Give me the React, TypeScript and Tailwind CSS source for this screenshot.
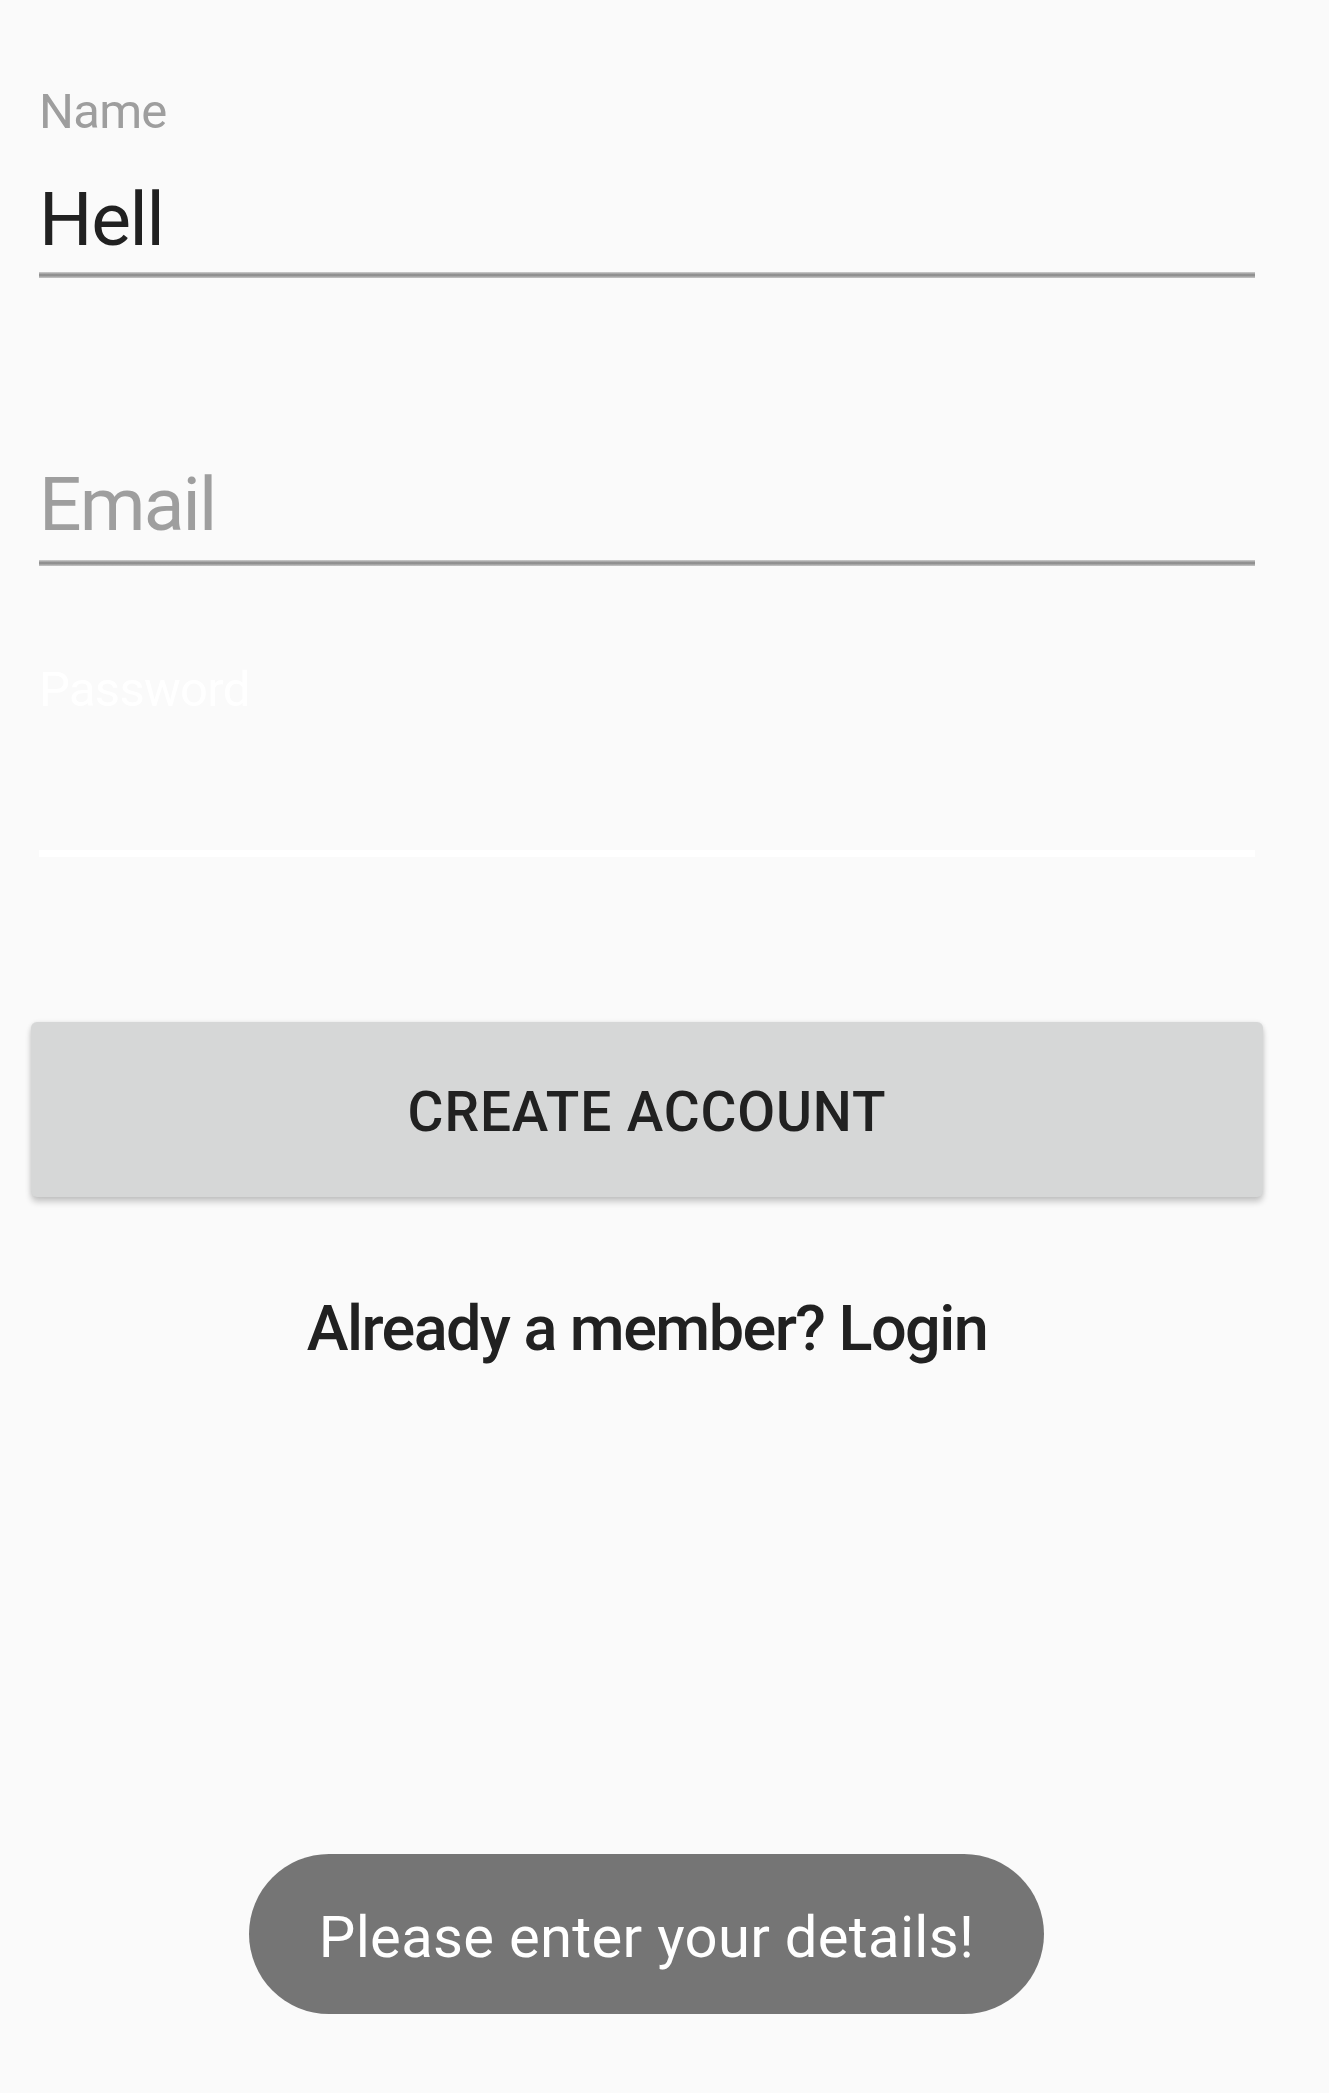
export default function App() {
  return (
    <div className="relative min-h-[2093px] bg-[#fafafa] font-['Roboto',sans-serif]">
      <div className="flex flex-col pl-[39px] pr-[74px] pt-[87px]">
        {/* name */}
        <label className="text-[49px] leading-none tracking-[-0.015em] text-[#9e9e9e]">Name</label>
        <div className="mt-[46px] text-[75px] leading-none tracking-[-0.018em] text-[#212121]">Hell</div>
        <div className="mt-[15px] h-[6px] bg-linear-to-b from-[#cfcfcf] via-[#858585] to-[#c8c8c8]" />

        {/* email */}
        <div className="mt-[189px] text-[75px] leading-none tracking-[-0.025em] text-[#9e9e9e]">Email</div>
        <div className="mt-[18px] h-[6px] bg-linear-to-b from-[#cfcfcf] via-[#858585] to-[#c8c8c8]" />

        {/* password, white on near-white */}
        <label className="mt-[99px] text-[49px] leading-none tracking-[-0.015em] text-white">Password</label>
        <div className="mt-[136px] h-[7px] bg-white" />

        <button className="mt-[165px] -mx-[8px] flex h-[175px] items-center justify-center rounded-[6px] bg-[#d6d7d7] pt-[5px] text-[55px] font-medium leading-none tracking-[0.016em] text-[#212121] shadow-[0_5px_6px_rgba(0,0,0,0.2),0_0_4px_rgba(0,0,0,0.08)]">
          CREATE ACCOUNT
        </button>

        <p className="mt-[100px] text-center text-[63px] font-medium leading-none tracking-[-0.025em] text-[#212121]">
          Already a member? Login
        </p>
      </div>

      <div className="absolute left-[249px] top-[1854px] flex h-[160px] w-[795px] items-center justify-center rounded-full bg-[#757575] pt-[5px] text-[58px] leading-none tracking-[0.005em] text-white">
        Please enter your details!
      </div>
    </div>
  );
}
